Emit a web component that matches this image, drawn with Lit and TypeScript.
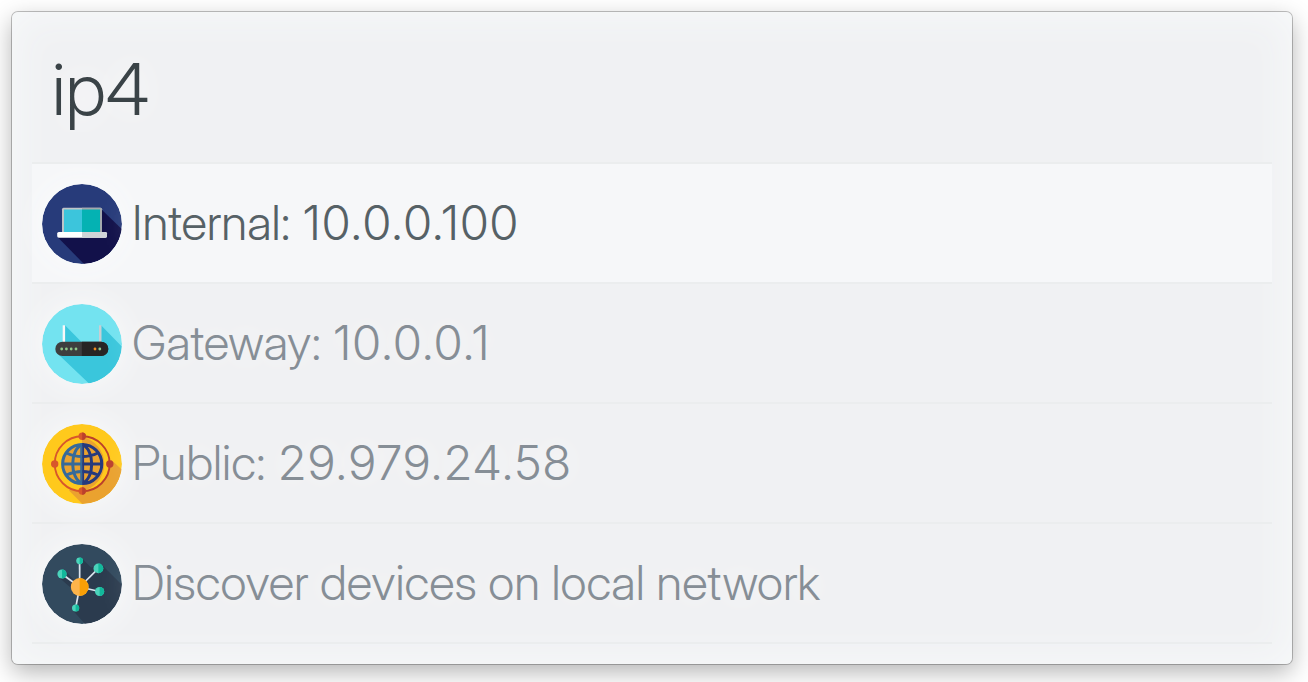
import { LitElement, html, svg, css } from "lit";
import { customElement, state } from "lit/decorators.js";

const laptop = svg`
  <circle cx="40" cy="40" r="40" fill="#273b7a"/>
  <path d="M59 25 79.7 45A40 40 0 0 1 42 80L16 53.5Z" fill="#12114a"/>
  <rect x="20" y="23.7" width="40" height="26" rx="1.5" fill="#bfc4c8"/>
  <path d="M40 23.7H58.5A1.5 1.5 0 0 1 60 25.2V49H40Z" fill="#a3a9ad"/>
  <path d="M22 25.6H40V48H22Z" fill="#3cc5dc"/>
  <path d="M40 25.6H58V48H40Z" fill="#04b2b3"/>
  <rect x="15.2" y="48" width="49.8" height="5.7" rx="1.6" fill="#fff"/>
  <path d="M40 48H63.4A1.6 1.6 0 0 1 65 49.6V52.1A1.6 1.6 0 0 1 63.4 53.7H40Z" fill="#d0d4d7"/>`;

const router = svg`
  <circle cx="40" cy="40" r="40" fill="#73e3f0"/>
  <path d="M23 21.3 40 38.5H23Z" fill="#3ac6dc"/>
  <path d="M59.3 21.5 79.8 42.5A40 40 0 0 1 47 79.4L16 50 59.3 40Z" fill="#3ac6dc"/>
  <rect x="20.7" y="21.3" width="2.4" height="18" fill="#f8f8f8"/>
  <rect x="57" y="21.3" width="2.4" height="18" fill="#c9ced3"/>
  <rect x="13.3" y="37.7" width="53" height="14.4" rx="7.2" fill="#3e3e3f"/>
  <path d="M39.8 37.7H59.1A7.2 7.2 0 0 1 59.1 52.1H39.8Z" fill="#272525"/>
  <g fill="#8fc98b"><circle cx="19.7" cy="45" r="1.4"/><circle cx="24.4" cy="45" r="1.4"/><circle cx="29.2" cy="45" r="1.4"/><circle cx="34" cy="45" r="1.4"/><circle cx="57.8" cy="45" r="1.4"/></g>
  <circle cx="53" cy="45" r="1.4" fill="#ee8b1f"/>`;

const globe = svg`
  <circle cx="40" cy="40" r="40" fill="#ffc91c"/>
  <path d="M69.5 36 79.7 45.5A40 40 0 0 1 40.5 80L27 66.5Z" fill="#eaa22f"/>
  <circle cx="40" cy="40" r="27" fill="#ffc91c"/>
  <path d="M40 13A27.5 27.5 0 0 1 40 67Z" fill="#eaa22f"/>
  <circle cx="40" cy="40" r="20" fill="#eaa22f"/>
  <g fill="none" stroke-width="1.9">
    <path d="M40.2 12.3A27.5 27.5 0 0 0 40.2 67.3" stroke="#d8572b"/>
    <path d="M40.2 12.3A27.5 27.5 0 0 1 40.2 67.3" stroke="#bb402c"/>
  </g>
  <g fill="#d8572b"><circle cx="40.2" cy="12.3" r="3.7"/><circle cx="12.7" cy="40" r="3.7"/><circle cx="40.2" cy="67" r="3.7"/></g>
  <g fill="#bb402c"><path d="M40.2 8.6A3.7 3.7 0 0 1 40.2 16Z"/><path d="M40.2 63.3A3.7 3.7 0 0 1 40.2 70.7Z"/><circle cx="67.8" cy="40" r="3.7"/></g>
  <g fill="none" stroke-width="3">
    <path d="M40.2 20.4A19.6 19.6 0 0 0 40.2 59.6M40.2 20.4C27.5 26 27.5 54 40.2 59.6M20.6 40H40.2M24.5 29Q32 32.6 40.2 32.6M24.5 51Q32 47.6 40.2 47.6" stroke="#366a9a"/>
    <path d="M40.2 20.4A19.6 19.6 0 0 1 40.2 59.6M40.2 20.4C52.9 26 52.9 54 40.2 59.6M59.8 40H40.2M55.9 29Q48.4 32.6 40.2 32.6M55.9 51Q48.4 47.6 40.2 47.6" stroke="#263a7d"/>
    <path d="M41.1 19.4V60.6" stroke="#263a7d" stroke-width="2"/>
    <path d="M39.2 19.4V60.6" stroke="#366a9a" stroke-width="2"/>
  </g>`;

const nodes: [number, number, number][] = [
  [37.6, 16.8, 3.4],
  [56.4, 24.4, 4.9],
  [20, 30, 4.6],
  [57.6, 47.5, 4.6],
  [33.6, 64, 3.6],
];

const network = svg`
  <circle cx="40" cy="40" r="40" fill="#324a5e"/>
  <path d="M40 14.4 49 23.5 59.8 20.8 79.5 40.5A40 40 0 0 1 43 79.9L31 66.6 36 50 17 33.5 23 26.8 33 37 38 34Z" fill="#2b3b4e"/>
  ${nodes.map(([x, y]) => svg`<path d="M37.7 43 ${x} ${y}" stroke="#dce4ee" stroke-width="1.7"/>`)}
  ${nodes.map(
    ([x, y, r]) => svg`<circle cx=${x} cy=${y} r=${r} fill="#4bd3bb"/>
      <path d="M${x} ${y - r}A${r} ${r} 0 0 1 ${x} ${y + r}Z" fill="#12b89b"/>`
  )}
  <circle cx="37.7" cy="43" r="8.9" fill="#fdb44b"/>
  <path d="M37.7 34.1A8.9 8.9 0 0 1 37.7 51.9Z" fill="#f89f06"/>`;

const results = [
  { icon: laptop, label: "Internal: ", address: "10.0.0.100" },
  { icon: router, label: "Gateway: ", address: "10.0.0.1" },
  { icon: globe, label: "Public: ", address: "29.979.24.58" },
  { icon: network, label: "Discover devices on local network", address: "" },
];

@customElement("app-root")
export class AppRoot extends LitElement {
  @state() private selected = 0;

  static styles = css`
    :host {
      display: block;
      padding: 12px 16px 18px 12px;
      background: #fff;
      font-family: "Inter Display", Inter, "Liberation Sans", sans-serif;
      font-weight: 300;
    }
    .panel {
      padding: 20px;
      border-radius: 6px;
      background: #f0f1f3;
      box-shadow:
        inset 0 0 40px #f8fafb,
        0 0 0 1px rgba(0, 0, 0, 0.24),
        0 8px 24px rgba(0, 0, 0, 0.3);
    }
    .query {
      display: block;
      box-sizing: border-box;
      width: 100%;
      height: 132px;
      padding: 0 20px 18px;
      border: 0;
      border-bottom: 2px solid #ebedee;
      outline: 0;
      background: none;
      color: #3a4347;
      font: inherit;
      font-size: 72px;
      text-shadow: 0 0 32px #fff;
    }
    .results {
      margin: 0;
      padding: 0;
      list-style: none;
    }
    .result {
      display: flex;
      align-items: center;
      gap: 10px;
      width: 100%;
      padding: 20px 10px 18px;
      border: 0;
      border-bottom: 2px solid #ebedee;
      background: none;
      color: #868e96;
      font: inherit;
      font-size: 48px;
      line-height: 80px;
      text-align: left;
      text-shadow: 0 0 32px #fff;
    }
    .result.selected {
      background: #f6f7f9;
      color: #566166;
    }
    .label {
      padding-bottom: 2px;
      line-height: 78px;
    }
    .address {
      font-family: Inter, "Liberation Sans", sans-serif;
    }
    .icon {
      flex: none;
      width: 80px;
      height: 80px;
      border-radius: 50%;
      box-shadow: 0 0 32px #fafbfc;
    }
  `;

  render() {
    return html`
      <main class="panel">
        <input class="query" type="text" aria-label="Search" spellcheck="false" .value=${"ip4"} />
        <ul class="results">
          ${results.map(
            (r, i) => html`<li>
              <button
                type="button"
                class="result ${i === this.selected ? "selected" : ""}"
                @click=${() => (this.selected = i)}
              >
                <svg class="icon" viewBox="0 0 80 80" aria-hidden="true">${r.icon}</svg>
                <span class="label">${r.label}<span class="address">${r.address}</span></span>
              </button>
            </li>`
          )}
        </ul>
      </main>
    `;
  }
}
